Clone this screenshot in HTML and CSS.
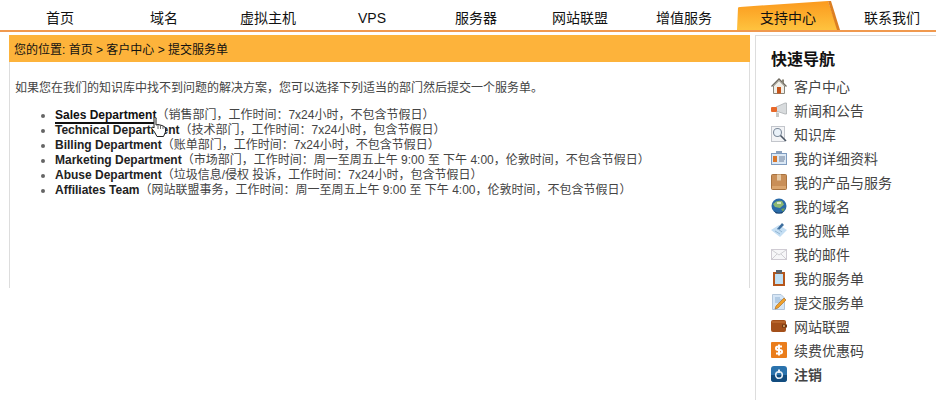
FILE: index.html
```html
<!DOCTYPE html>
<html>
<head>
    <meta charset="utf-8">
    <title>提交服务单</title>
    <link rel="stylesheet" href="styles.css">
</head>
<body>
<div id="topnav">
    <a class="navlink">首页</a>
    <a class="navlink">域名</a>
    <a class="navlink">虚拟主机</a>
    <a class="navlink">VPS</a>
    <a class="navlink">服务器</a>
    <a class="navlink">网站联盟</a>
    <a class="navlink">增值服务</a>
    <a class="navlink navactive">
        <svg class="tabshape" width="104" height="30" viewBox="0 0 104 30">
            <defs>
                <linearGradient id="tabfill" x1="0" y1="0" x2="0" y2="1">
                    <stop offset="0" stop-color="#fb9a1e"/>
                    <stop offset="0.55" stop-color="#fdb02f"/>
                    <stop offset="1" stop-color="#fec33f"/>
                </linearGradient>
            </defs>
            <path d="M1 30 L2 8 Q2 7 4 7 L92 1 L102 30 Z" fill="url(#tabfill)"/>
            <path d="M92 1 L95 1 L104 30 L101 30 Z" fill="#dc7f22"/>
        </svg>
        <span class="tablabel">支持中心</span>
    </a>
    <a class="navlink">联系我们</a>
</div>

<div id="wrap">
    <div id="content">
        <div id="crumbs">您的位置: 首页 &gt; 客户中心 &gt; 提交服务单</div>
        <p class="intro">如果您在我们的知识库中找不到问题的解决方案，您可以选择下列适当的部门然后提交一个服务单。</p>
        <ul class="deptlist">
            <li><a class="dept depthover">Sales Department</a>（销售部门，工作时间：7x24小时，不包含节假日）</li>
            <li><a class="dept">Technical Department</a>（技术部门，工作时间：7x24小时，包含节假日）</li>
            <li><a class="dept">Billing Department</a>（账单部门，工作时间：7x24小时，不包含节假日）</li>
            <li><a class="dept">Marketing Department</a>（市场部门，工作时间：周一至周五上午 9:00 至 下午 4:00，伦敦时间，不包含节假日）</li>
            <li><a class="dept">Abuse Department</a>（垃圾信息/侵权 投诉，工作时间：7x24小时，包含节假日）</li>
            <li><a class="dept">Affiliates Team</a>（网站联盟事务，工作时间：周一至周五上午 9:00 至 下午 4:00，伦敦时间，不包含节假日）</li>
        </ul>
        <svg class="handcursor" width="17" height="21" viewBox="0 0 17 21">
            <path d="M3 1.500 Q3 .5 4 .5 Q5 .5 5 1.500 L5 8 L7 7.500 L9 8 L11 8.500 L13 9.500 Q14.500 10 14.500 12 L14.500 15 L12.500 19.500 L6 19.500 L3.500 15 L.8 11.500 Q.5 10 2 10 L3 11 Z" fill="#fff" stroke="#222" stroke-width="1"/>
            <path d="M7 8 V12 M9.500 8.500 V12 M12 9.500 V12" stroke="#444" stroke-width=".8" fill="none"/>
        </svg>
    </div>

    <div id="sidebar">
        <div class="sidetitle">快速导航</div>

        <a class="sidelink">
            <svg class="icon" viewBox="0 0 16 16"><path d="M2.500 8 V15.500 H13.500 V8 L8 2.500 Z" fill="#f1efe8" stroke="#8a8578"/><path d="M.5 8.500 L8 1 L15.500 8.500" fill="none" stroke="#6f6a60" stroke-width="1.300"/><rect x="11" y="1.500" width="2" height="3.500" fill="#8a8578"/><rect x="6" y="9" width="4" height="6.500" fill="#c5541a"/></svg>
            客户中心
        </a>
        <a class="sidelink">
            <svg class="icon" viewBox="0 0 16 16"><path d="M5 5 L14 1 L15.500 1 L15.500 12 L14 12 L5 9 Z" fill="#d8dbdd" stroke="#a3a7ab" stroke-width=".7"/><rect x="0" y="5" width="6" height="5" rx="1" fill="#e8692a"/><path d="M5 10 L8 11 L8 15 L5 15 Z" fill="#c9c9c6"/></svg>
            新闻和公告
        </a>
        <a class="sidelink">
            <svg class="icon" viewBox="0 0 16 16"><rect x=".5" y=".5" width="13" height="15" fill="#f3f4f6" stroke="#c3c6cc"/><circle cx="6.500" cy="6.500" r="4" fill="#eaf2f9" stroke="#7d8a9a" stroke-width="1.100"/><path d="M9.500 9.500 L15 15" stroke="#4a5563" stroke-width="1.600"/></svg>
            知识库
        </a>
        <a class="sidelink">
            <svg class="icon" viewBox="0 0 16 16"><rect x="5" y="1" width="6" height="3" fill="#8da2bd"/><rect x=".5" y="3.500" width="15" height="11" fill="#dbe8f5" stroke="#7f9cc0"/><rect x="2" y="6" width="4" height="6" fill="#d8772c"/><path d="M8 7 H14 M8 9 H14 M8 11 H13" stroke="#6c7f98"/></svg>
            我的详细资料
        </a>
        <a class="sidelink">
            <svg class="icon" viewBox="0 0 16 16"><rect x=".5" y=".5" width="15" height="15" rx="1" fill="#c98f58" stroke="#a87340"/><rect x="6" y=".5" width="4" height="6" fill="#e6c9a4"/><path d="M1 12 H15 V15 H1 Z" fill="#dba66f"/></svg>
            我的产品与服务
        </a>
        <a class="sidelink">
            <svg class="icon" viewBox="0 0 16 16"><circle cx="8" cy="8" r="7.500" fill="#2a6ba8"/><path d="M2 6 Q6 1.500 11 3 L13 6.500 L9 10 L4 9 Z" fill="#8db872"/><path d="M6 4 H10 V6 H6 Z" fill="#d7e6c8"/><path d="M10 11 L14 10 L12 14 Z" fill="#6f9e5d"/><path d="M3 13 Q8 16.500 13 13 L11 15.500 H5 Z" fill="#163e6a"/></svg>
            我的域名
        </a>
        <a class="sidelink">
            <svg class="icon" viewBox="0 0 16 16"><path d="M0 8 L8 3 L16 8 L9 15 Z" fill="#c4def3"/><path d="M6 7 L11 1 L13 3 L8 8 Z" fill="#3d6e9e"/><path d="M4 9 L9 12 M7 7 L11 10" stroke="#93b6d3"/></svg>
            我的账单
        </a>
        <a class="sidelink">
            <svg class="icon" viewBox="0 0 16 16"><rect x=".5" y="3.500" width="15" height="10" fill="#f6f6f8" stroke="#cfcbd3"/><path d="M1 4 L8 9 L15 4 M1 13 L6 8 M15 13 L10 8" stroke="#cfcfd3" fill="none"/></svg>
            我的邮件
        </a>
        <a class="sidelink">
            <svg class="icon" viewBox="0 0 16 16"><rect x="2" y="2" width="12" height="14" fill="#b5561b"/><rect x="4" y="4" width="8" height="10" fill="#bfe0f5"/><rect x="5" y="0" width="6" height="3.500" fill="#59636d"/></svg>
            我的服务单
        </a>
        <a class="sidelink">
            <svg class="icon" viewBox="0 0 16 16"><path d="M1.500 .5 H10 L13.500 4 V15.500 H1.500 Z" fill="#d6e6f6" stroke="#b3c6da"/><path d="M4 4 H9 M4 6 H11 M4 8 H9" stroke="#8fb1d2"/><path d="M4 15 L5 12 L13 4 L15 6 L7 14 Z" fill="#f0a12b" stroke="#a5651c" stroke-width=".6"/></svg>
            提交服务单
        </a>
        <a class="sidelink">
            <svg class="icon" viewBox="0 0 16 16"><rect x="0" y="2" width="15" height="12" rx="2" fill="#a4501a"/><path d="M1 4 H14" stroke="#c9793c"/><rect x="11" y="6.500" width="5" height="3" fill="#6d3410"/><circle cx="13" cy="8" r="1" fill="#e0b070"/></svg>
            网站联盟
        </a>
        <a class="sidelink">
            <svg class="icon" viewBox="0 0 16 16"><rect x="0" y="0" width="16" height="16" rx="1" fill="#ea7d1b"/><path d="M11 4.500 H7 Q5 4.500 5 6.300 Q5 8 7 8 H9 Q11 8 11 9.800 Q11 11.500 9 11.500 H5 M8 2.500 V13.500" stroke="#fff" stroke-width="2" fill="none"/></svg>
            续费优惠码
        </a>
        <a class="sidelink sidebold">
            <svg class="icon" viewBox="0 0 16 16"><rect x="0" y="0" width="16" height="16" rx="3" fill="#2a72ac"/><path d="M0 9 H16 V13 Q16 16 13 16 H3 Q0 16 0 13 Z" fill="#124c7e"/><circle cx="8" cy="9" r="3.300" fill="none" stroke="#e6eef5" stroke-width="1.600"/><rect x="7" y="3.500" width="2" height="3.500" fill="#e6eef5"/></svg>
            注销
        </a>
    </div>
</div>
</body>
</html>
```

FILE: styles.css
```css
body {
    margin: 0;
    padding: 0;
    background-color: #fff;
    color: #444;
    font-family: "Liberation Sans", "Noto Sans CJK SC", sans-serif;
    font-size: 12px;
    overflow: hidden;
}

#topnav {
    display: flex;
    height: 30px;
    padding-left: 8px;
    border-bottom: 2px solid #f0994f;
    overflow: hidden;
}

.navlink {
    position: relative;
    flex: 0 0 104px;
    padding-top: 5px;
    line-height: 26px;
    text-align: center;
    font-size: 14px;
    color: #111;
}

.tabshape {
    position: absolute;
    left: 0;
    top: 0;
}

.tablabel {
    position: relative;
}

#wrap {
    display: flex;
    height: 368px;
    padding: 3px 0 0 9px;
}

#content {
    position: relative;
    box-sizing: border-box;
    width: 741px;
    height: 253px;
    border-left: 1px solid #ddd;
    border-right: 1px solid #ddd;
}

#crumbs {
    margin: 0 -1px;
    padding: 2px 0 0 5px;
    height: 25px;
    line-height: 27px;
    background-color: #fdb33b;
    color: #111;
}

.intro {
    margin: 19px 0 0 5px;
    line-height: 15px;
}

.deptlist {
    margin: 12px 0 0;
    padding: 0 0 0 45px;
    line-height: 15px;
}

.deptlist li::marker {
    color: #666;
}

.dept {
    font-weight: bold;
    color: #222;
}

.depthover {
    color: #111;
    border-bottom: 2px solid #111;
}

.handcursor {
    position: absolute;
    left: 141px;
    top: 82px;
}

#sidebar {
    flex: 1;
    margin-left: 5px;
    padding: 12px 0 0 15px;
    border-left: 1px solid #ddd;
    border-top: 1px solid #ddd;
}

.sidetitle {
    margin-bottom: 2px;
    line-height: 24px;
    font-size: 16px;
    font-weight: bold;
    color: #111;
}

.sidelink {
    display: flex;
    align-items: center;
    gap: 7px;
    height: 24px;
    font-size: 14px;
}

.icon {
    flex: 0 0 16px;
    width: 16px;
    height: 16px;
}

.sidebold {
    font-weight: bold;
}
```
